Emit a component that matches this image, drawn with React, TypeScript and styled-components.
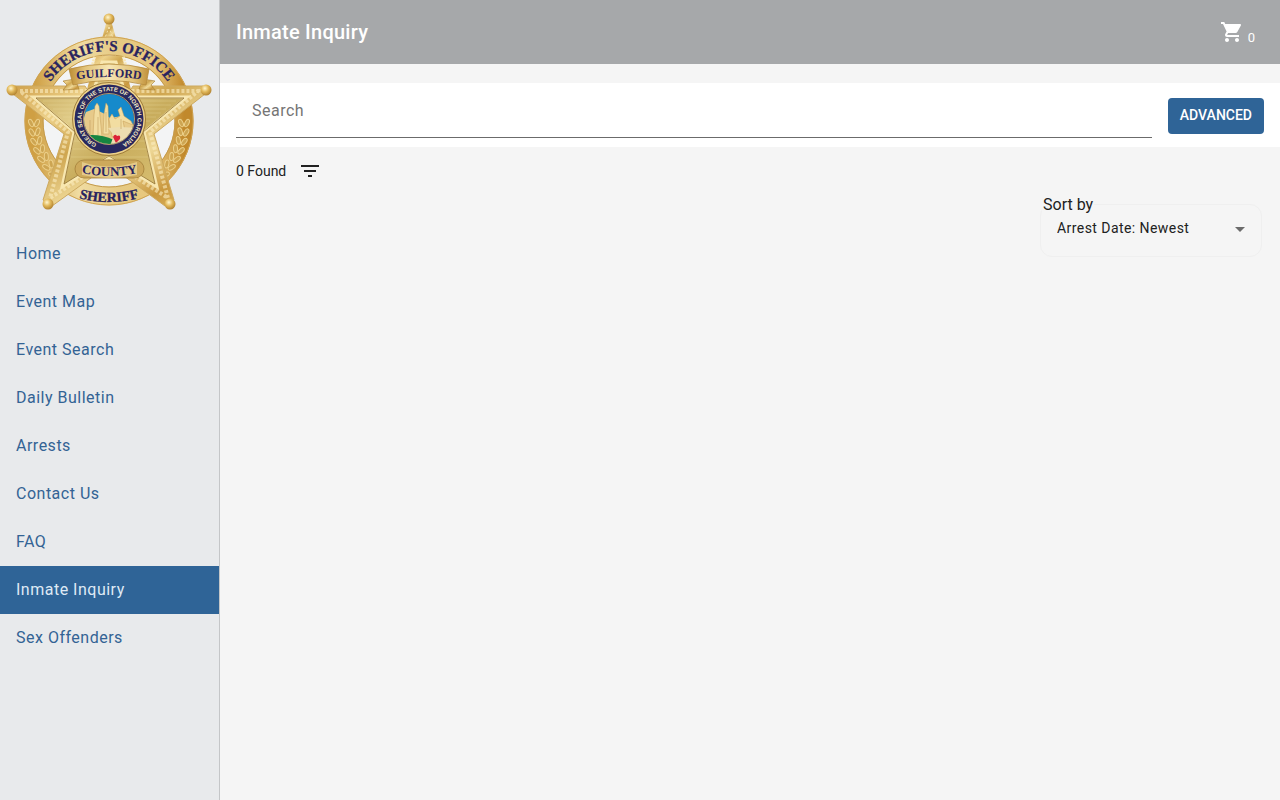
import React from 'react';
import styled, { createGlobalStyle } from 'styled-components';

const GlobalStyle = createGlobalStyle`
  *, *::before, *::after { box-sizing: border-box; }
  body {
    margin: 0;
    background: #f5f5f5;
    color: #212121;
    font-family: Roboto, 'Liberation Sans', sans-serif;
    font-size: 16px;
    line-height: 24px;
  }
  button, input, select { font-family: inherit; }
`;

const Shell = styled.div`
  display: flex;
  min-height: 100vh;
`;

const Sidebar = styled.aside`
  flex: 0 0 220px;
  background: #e8eaec;
  border-right: 1px solid #c4c6c8;
`;

const Badge = styled.svg`
  display: block;
  width: 100%;
  height: auto;
  margin-bottom: 10px;
`;

const NavList = styled.ul`
  list-style: none;
  margin: 0;
  padding: 0;
`;

const NavLink = styled.a<{ $active?: boolean }>`
  display: flex;
  align-items: center;
  height: 48px;
  padding: 0 16px;
  letter-spacing: 0.03125em;
  text-decoration: none;
  color: ${(p) => (p.$active ? '#dfeaf5' : '#336394')};
  background: ${(p) => (p.$active ? '#2f6497' : 'transparent')};
`;

const Main = styled.main`
  flex: 1;
  min-width: 0;
`;

const TopBar = styled.header`
  display: flex;
  align-items: center;
  justify-content: space-between;
  height: 64px;
  padding: 0 25px 0 16px;
  background: #a6a8aa;
  color: #fff;
`;

const Title = styled.h1`
  margin: 0;
  font-size: 20px;
  line-height: 32px;
  font-weight: 500;
  letter-spacing: 0.0125em;
`;

const CartButton = styled.button`
  display: flex;
  align-items: flex-end;
  gap: 4px;
  padding: 0;
  border: 0;
  background: none;
  color: inherit;
  font-size: 13px;
  line-height: 12px;
`;

const SearchBar = styled.form`
  display: flex;
  align-items: flex-start;
  gap: 16px;
  height: 64px;
  margin-top: 19px;
  padding: 0 16px;
  background: #fff;
`;

const SearchInput = styled.input`
  flex: 1;
  min-width: 0;
  height: 55px;
  padding: 0 16px;
  border: 0;
  border-bottom: 1px solid #6b6b6b;
  background: transparent;
  color: #212121;
  font-size: 16px;
  letter-spacing: 0.03125em;
  outline: none;
  &::placeholder { color: #757575; opacity: 1; }
`;

const AdvancedButton = styled.button`
  height: 36px;
  margin-top: 15px;
  padding: 0 12px 2px;
  border: 0;
  border-radius: 4px;
  background: #2f6497;
  color: #fff;
  font-size: 14px;
  font-weight: 500;
`;

const ResultBar = styled.div`
  display: flex;
  align-items: center;
  gap: 12px;
  height: 48px;
  padding: 0 16px;
  font-size: 14px;
`;

const IconButton = styled.button`
  display: flex;
  padding: 0;
  border: 0;
  background: none;
  color: #212121;
`;

const SortRow = styled.div`
  display: flex;
  justify-content: flex-end;
  padding: 0 18px;
`;

const SortField = styled.div`
  display: flex;
  flex-direction: column;
  width: 222px;
`;

const SortLabel = styled.label`
  position: relative;
  align-self: flex-start;
  margin: -2px 0 -13px 2px;
  padding: 0 1px;
  background: #f5f5f5;
`;

const SelectBox = styled.div`
  display: flex;
  align-items: center;
  height: 53px;
  padding: 0 9px 4px 16px;
  border: 1px solid #efefef;
  border-radius: 12px;
`;

const Select = styled.select`
  flex: 1;
  min-width: 0;
  padding: 0 0 2px;
  border: 0;
  appearance: none;
  background: none;
  color: #212121;
  font-size: 14px;
  line-height: 24px;
  letter-spacing: 0.03125em;
  outline: none;
`;

const links = [
  'Home',
  'Event Map',
  'Event Search',
  'Daily Bulletin',
  'Arrests',
  'Contact Us',
  'FAQ',
  'Inmate Inquiry',
  'Sex Offenders',
];

const tips = [
  [109, 19],
  [12, 90],
  [206, 90],
  [48, 204],
  [170, 204],
];

const STAR_BODY =
  'M15 86 L85 86 L92 97 L126 97 L133 86 L203 86 L205 94 L154 134 L174 200 L165 206 L109 165 L52 206 L43 200 L64 134 L13 94 Z';
const STAR_BEADS =
  'M88 91 L20 91 L68 132 L50 198 L109 160 L168 198 L150 132 L198 91 L130 91';
const STAR_FACE =
  'M92 97 L33 97 L74 132 L62 187 L109 157 L157 187 L144 132 L187 97 L126 97 L116 62 L102 62 Z';

function Laurel() {
  return (
    <g stroke="#ecd08a" strokeWidth="1" fill="#cda552">
      {[0, 1, 2, 3, 4, 5, 6].map((i) => (
        <g key={i} transform={`rotate(${-7 * i} 109 121)`}>
          <ellipse cx="31" cy="123" rx="2" ry="4" transform="rotate(-24 31 123)" />
          <ellipse cx="37" cy="123" rx="2" ry="4" transform="rotate(24 37 123)" />
        </g>
      ))}
    </g>
  );
}

function SheriffBadge() {
  return (
    <Badge viewBox="0 0 219 220" role="img" aria-label="Guilford County Sheriff's Office">
      <defs>
        <linearGradient id="gold" x1="0" y1="0" x2="1" y2="1">
          <stop offset="0" stopColor="#cfa04a" />
          <stop offset="0.22" stopColor="#edd18a" />
          <stop offset="0.42" stopColor="#cfa650" />
          <stop offset="0.62" stopColor="#efd998" />
          <stop offset="0.82" stopColor="#c9983f" />
          <stop offset="1" stopColor="#e2bd68" />
        </linearGradient>
        <linearGradient id="face" x1="0" y1="0" x2="1" y2="1">
          <stop offset="0" stopColor="#bf9f4c" />
          <stop offset="0.35" stopColor="#e0cb88" />
          <stop offset="0.6" stopColor="#c8ac5c" />
          <stop offset="1" stopColor="#dcc478" />
        </linearGradient>
        <linearGradient id="ribbon" x1="0" y1="0" x2="1" y2="0">
          <stop offset="0" stopColor="#bd8d34" />
          <stop offset="0.2" stopColor="#e3c47a" />
          <stop offset="0.5" stopColor="#f6e6b4" />
          <stop offset="0.8" stopColor="#e3c47a" />
          <stop offset="1" stopColor="#c0903a" />
        </linearGradient>
        <linearGradient id="band" x1="0" y1="0" x2="1" y2="0">
          <stop offset="0" stopColor="#cf9f43" />
          <stop offset="0.3" stopColor="#f0dca2" />
          <stop offset="0.55" stopColor="#e6ca84" />
          <stop offset="0.8" stopColor="#e8c77c" />
          <stop offset="1" stopColor="#c1892c" />
        </linearGradient>
        <radialGradient id="ball" cx="0.4" cy="0.35" r="0.65">
          <stop offset="0" stopColor="#fff6cf" />
          <stop offset="0.5" stopColor="#e2b95b" />
          <stop offset="1" stopColor="#b38431" />
        </radialGradient>
        <clipPath id="sealClip">
          <circle cx="109" cy="119" r="25" />
        </clipPath>
        <path id="arcTop" d="M38 122 A71 71 0 0 1 180 122" />
        <path id="arcGuilford" d="M69 81 Q109 73 149 81" />
        <path id="arcSeal" d="M109 147 A28 28 0 1 1 110 147" />
        <path id="arcCounty" d="M74 171 Q109 181 145 171" />
        <path id="arcSheriff" d="M69 195 Q109 209 149 195" />
      </defs>

      <circle cx="109" cy="121" r="66" fill="#f3f4f5" />
      <path d="M101 42 L106 24 H112 L117 42 Z" fill="url(#gold)" />
      <circle cx="109" cy="121" r="75" fill="none" stroke="url(#band)" strokeWidth="19" />
      <circle cx="109" cy="121" r="84" fill="none" stroke="#cfa352" strokeWidth="1" />
      <circle cx="109" cy="121" r="66" fill="none" stroke="#c49a4c" strokeWidth="1" />
      <Laurel />
      <g transform="translate(218 0) scale(-1 1)">
        <Laurel />
      </g>

      <path d="M86 93 L96 56 H122 L132 93 Z" fill="url(#gold)" />
      <path d="M91 70 L95 56 M127 70 L123 56" stroke="#f7e6b4" strokeWidth="3" strokeDasharray="2 1" />
      <path d="M109 27 L105 38 M109 27 L113 38" stroke="#f7e6b4" strokeDasharray="2 2" />
      <path d={STAR_BODY} fill="url(#gold)" stroke="#cda95f" strokeWidth="1" />
      <path
        d={STAR_BEADS}
        fill="none"
        stroke="#fbecc0"
        strokeWidth="4"
        strokeDasharray="3 2"
        opacity="0.6"
      />
      <path d={STAR_FACE} fill="url(#face)" stroke="#f8e7b0" strokeWidth="3" />
      <path
        d="M92 98 L36 98 L75 132 L64 184 L109 156 L155 184 L143 132 L184 98 L126 98"
        fill="none"
        stroke="#8f7031"
        strokeWidth="0.8"
      />
      <path
        d="M43 101H176 M48 105H171 M53 109H166 M58 113H161 M63 117H156 M68 121H150 M76 133H142 M74 141H144 M73 149H146 M71 157H148"
        stroke="#efe0a4"
        opacity="0.3"
      />

      {tips.map(([x, y]) => (
        <circle key={`${x}-${y}`} cx={x} cy={y} r="5.5" fill="url(#ball)" />
      ))}

      <path d="M63 81 L75 79 L79 89 L63 90 L67 85 Z" fill="url(#gold)" stroke="#a57a2d" strokeWidth="0.6" />
      <path d="M155 81 L143 79 L139 89 L155 90 L151 85 Z" fill="url(#gold)" stroke="#a57a2d" strokeWidth="0.6" />
      <path
        d="M69 69 Q109 59 149 69 L146 85 Q109 76 73 85 Z"
        fill="url(#ribbon)"
        stroke="#b58a3c"
        strokeWidth="0.8"
      />

      <circle cx="109" cy="119" r="36.5" fill="#edd28b" stroke="#8f6a28" strokeWidth="0.8" />
      <circle cx="109" cy="119" r="34.5" fill="#28285f" />
      <g clipPath="url(#sealClip)">
        <rect x="83" y="93" width="52" height="52" fill="#168acb" />
        <path d="M82 122 L86 112 L94 109 L103 113 L110 118 L122 116 L136 127 V145 H82 Z" fill="#e7ca8a" />
        <path
          d="M93 137 L94 115 L95 106 L97 103 L99 106 L100 116 L102 137 Z M103 134 L104 114 L106 103 L108 106 L109 134 Z M109 119 L112 114 L115 119 L120 116 L118 110 L121 107 L124 116 L131 121 L133 125 L123 121 L125 131 L112 137 Z"
          fill="#f2dda1"
          stroke="#c79f58"
          strokeWidth="0.5"
        />
        <path d="M82 136 Q99 133 114 140 L112 146 H82 Z" fill="#168541" />
        <path d="M108 128 L114 135 L110 146 L136 144 L137 128 L120 127 Z" fill="#edddb0" />
        <path d="M113 137 Q115 133 117 136 Q121 134 120 139 L116 143 Z" fill="#dc2338" />
        <path d="M90 120 V135 M98 117 V135 M106 112 V132 M121 119 V129" stroke="#c9a768" strokeWidth="0.7" />
      </g>
      <circle cx="109" cy="119" r="25.5" fill="none" stroke="#d5b86f" strokeWidth="0.8" />

      <rect x="75" y="160" width="69" height="18" rx="9" fill="#cda95b" stroke="#a5803a" strokeWidth="0.8" />
      <path d="M82 162 Q109 171 137 162 L137 175 Q109 181 82 175 Z" fill="#efdca4" opacity="0.65" />

      <g fill="#28235f" fontFamily="'Liberation Serif', serif" fontWeight="700" textAnchor="middle">
        <text fontSize="15" stroke="#28235f" strokeWidth="0.3">
          <textPath href="#arcTop" startOffset="50%">SHERIFF'S OFFICE</textPath>
        </text>
        <text fontSize="12">
          <textPath href="#arcGuilford" startOffset="50%">GUILFORD</textPath>
        </text>
        <text fontSize="13">
          <textPath href="#arcCounty" startOffset="50%">COUNTY</textPath>
        </text>
        <text fontSize="14" stroke="#28235f" strokeWidth="0.3">
          <textPath href="#arcSheriff" startOffset="50%">SHERIFF</textPath>
        </text>
      </g>
      <text
        fill="#f4e9c4"
        fontFamily="'Liberation Sans', sans-serif"
        fontWeight="700"
        fontSize="6"
        textAnchor="middle"
      >
        <textPath href="#arcSeal" startOffset="50%">GREAT SEAL OF THE STATE OF NORTH CAROLINA</textPath>
      </text>
    </Badge>
  );
}

export default function App() {
  return (
    <>
      <GlobalStyle />
      <Shell>
        <Sidebar>
          <SheriffBadge />
          <nav>
            <NavList>
              {links.map((label) => (
                <li key={label}>
                  <NavLink
                    href="#"
                    $active={label === 'Inmate Inquiry'}
                    aria-current={label === 'Inmate Inquiry' ? 'page' : undefined}
                  >
                    {label}
                  </NavLink>
                </li>
              ))}
            </NavList>
          </nav>
        </Sidebar>
        <Main>
          <TopBar>
            <Title>Inmate Inquiry</Title>
            <CartButton type="button" aria-label="Cart, 0 items">
              <svg width="24" height="24" viewBox="0 0 24 24" fill="currentColor">
                <path d="M7 18c-1.1 0-1.99.9-1.99 2S5.9 22 7 22s2-.9 2-2-.9-2-2-2zM1 2v2h2l3.6 7.59-1.35 2.45c-.16.28-.25.61-.25.96 0 1.1.9 2 2 2h12v-2H7.42c-.14 0-.25-.11-.25-.25l.03-.12.9-1.63h7.45c.75 0 1.41-.41 1.75-1.03l3.58-6.49c.08-.14.12-.31.12-.48 0-.55-.45-1-1-1H5.21l-.94-2H1zm16 16c-1.1 0-1.99.9-1.99 2s.89 2 1.99 2 2-.9 2-2-.9-2-2-2z" />
              </svg>
              <span>0</span>
            </CartButton>
          </TopBar>
          <SearchBar>
            <SearchInput type="text" placeholder="Search" aria-label="Search" />
            <AdvancedButton type="button">ADVANCED</AdvancedButton>
          </SearchBar>
          <ResultBar>
            <span>0 Found</span>
            <IconButton type="button" aria-label="Filter results">
              <svg width="24" height="24" viewBox="0 0 24 24" fill="currentColor">
                <path d="M10 18h4v-2h-4v2zM3 6v2h18V6H3zm3 7h12v-2H6v2z" />
              </svg>
            </IconButton>
          </ResultBar>
          <SortRow>
            <SortField>
              <SortLabel htmlFor="sort">Sort by</SortLabel>
              <SelectBox>
                <Select id="sort" defaultValue="newest">
                  <option value="newest">Arrest Date: Newest</option>
                  <option value="oldest">Arrest Date: Oldest</option>
                </Select>
                <svg width="24" height="24" viewBox="0 0 24 24" fill="#6b6b6b" aria-hidden="true">
                  <path d="M7 10l5 5 5-5z" />
                </svg>
              </SelectBox>
            </SortField>
          </SortRow>
        </Main>
      </Shell>
    </>
  );
}
